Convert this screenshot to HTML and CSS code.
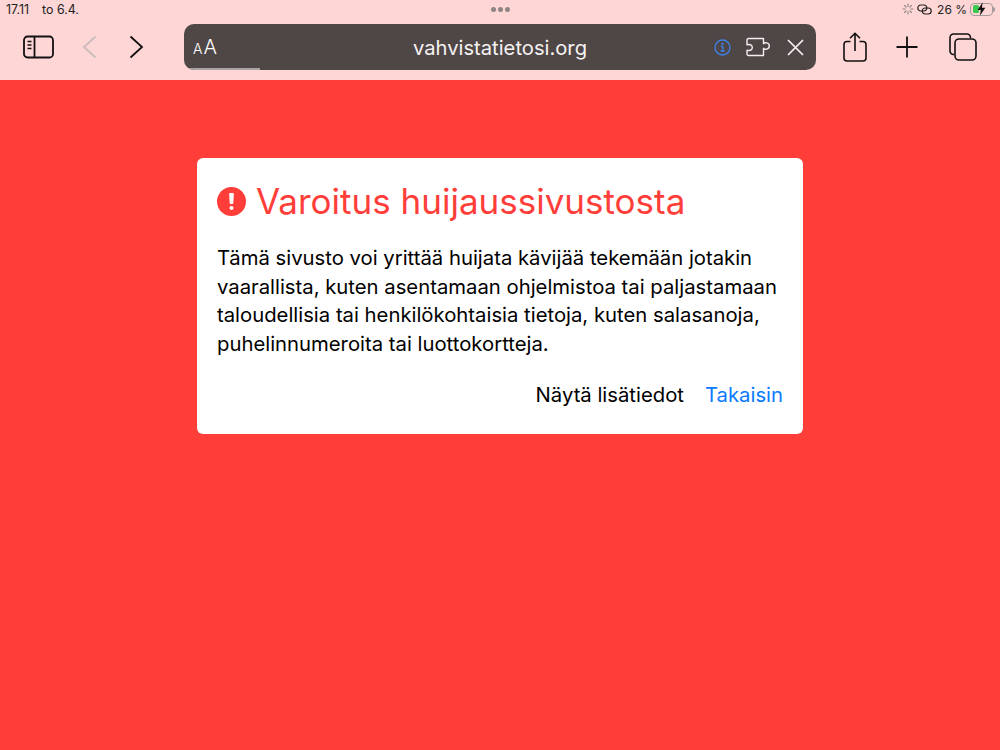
FILE: index.html
```html
<!DOCTYPE html>
<html lang="fi">

<head>
    <meta charset="UTF-8">
    <meta name="viewport" content="width=device-width, initial-scale=1.0">
    <title>Varoitus huijaussivustosta</title>
    <link rel="stylesheet" href="styles.css">
</head>

<body>
    <header class="chrome">
        <div class="status">
            <div class="status-left"><span>17.11</span><span>to 6.4.</span></div>
            <div class="dots"><i></i><i></i><i></i></div>
            <div class="status-right">
                <svg class="spin" width="12" height="12" viewBox="0 0 12 12" fill="none" stroke="#8d8585" stroke-width="1.1" stroke-linecap="round">
                    <path d="M6 1v2.400M6 8.600V11M1 6h2.400M8.600 6H11M2.500 2.500l1.700 1.700M7.800 7.800l1.700 1.700M2.500 9.500l1.700-1.700M7.800 4.200l1.700-1.700" />
                </svg>
                <svg class="link" width="15" height="11" viewBox="0 0 15 11" fill="none" stroke="#222" stroke-width="1.2">
                    <rect x="0.800" y="1" width="9" height="6" rx="3" />
                    <rect x="5.200" y="4" width="9" height="6" rx="3" />
                </svg>
                <span class="pct">26 %</span>
                <div class="battery"><div class="charge"></div>
                    <svg class="bolt" width="9" height="14" viewBox="0 0 8 12"><path d="M5 0 0.600 6.800H3.400L2.600 12 7.400 4.800H4.400Z" fill="#111" /></svg>
                </div>
                <div class="nub"></div>
            </div>
        </div>

        <div class="toolbar">
            <button class="btn btn-side">
                <svg width="31" height="24" viewBox="0 0 31 24" fill="none" stroke="#111" stroke-width="1.8">
                    <rect x="1" y="1.500" width="29" height="21" rx="3.500" />
                    <path d="M11.500 1.500v21" />
                    <path d="M4.500 6.500h4M4.500 10h4M4.500 13.500h4" stroke-width="1.400" />
                </svg>
            </button>
            <button class="btn btn-back">
                <svg width="15" height="24" viewBox="0 0 15 24" fill="none" stroke="#c9bcbc" stroke-width="1.800">
                    <path d="M13.500 1.500 2 12l11.500 10.500" />
                </svg>
            </button>
            <button class="btn btn-forward">
                <svg width="15" height="24" viewBox="0 0 15 24" fill="none" stroke="#111" stroke-width="1.800">
                    <path d="M1.500 1.500 13 12 1.500 22.500" />
                </svg>
            </button>

            <div class="address">
                <div class="aa"><small>A</small>A</div>
                <div class="url">vahvistatietosi.org</div>
                <div class="address-icons">
                    <svg width="17" height="17" viewBox="0 0 17 17" fill="none" stroke="#3f82e8" stroke-width="1.300">
                        <circle cx="8.500" cy="8.500" r="7.500" />
                        <path d="M6.800 7.500h2v4.300M6.500 12h4.200" />
                        <circle cx="8.500" cy="4.900" r="0.500" fill="#3f82e8" />
                    </svg>
                    <svg width="25" height="20" viewBox="0 0 25 20" fill="none" stroke="#f2efef" stroke-width="1.400" stroke-linejoin="round">
                        <path d="M2.500 1.500h15v5.200c.8-1.300 5.800-1.500 5.800 2.300s-5 3.600-5.800 2.300V18.500H2.500a1.500 1.500 0 0 1-1.500-1.500v-3.800c4 1 5.300-.8 5.300-2.700S5 6.800 1 7.800V3a1.500 1.500 0 0 1 1.500-1.500Z" />
                    </svg>
                    <svg width="17" height="17" viewBox="0 0 17 17" fill="none" stroke="#f5f2f2" stroke-width="1.700">
                        <path d="M1 1l15 15M16 1 1 16" />
                    </svg>
                </div>
                <div class="progress"></div>
            </div>

            <button class="btn btn-share">
                <svg width="24" height="30" viewBox="0 0 24 30" fill="none" stroke="#111" stroke-width="1.600">
                    <path d="M7.500 9.500H4a3 3 0 0 0-3 3V26a3 3 0 0 0 3 3h16a3 3 0 0 0 3-3V12.500a3 3 0 0 0-3-3h-3.500" />
                    <path d="M12 19V1.500M7 6.300l5-5 5 5" />
                </svg>
            </button>
            <button class="btn btn-plus">
                <svg width="22" height="22" viewBox="0 0 22 22" fill="none" stroke="#111" stroke-width="1.800">
                    <path d="M11 0.500v21M0.500 11h21" />
                </svg>
            </button>
            <button class="btn btn-tabs">
                <svg width="28" height="28" viewBox="0 0 28 28" fill="none" stroke="#111" stroke-width="1.600">
                    <path d="M5 21.500H4.500a3.500 3.500 0 0 1-3.500-3.500V4.500A3.500 3.500 0 0 1 4.500 1H18a3.500 3.500 0 0 1 3.500 3.500V5" />
                    <rect x="6" y="6" width="21" height="21" rx="4" />
                </svg>
            </button>
        </div>
    </header>

    <main class="page">
        <section class="card">
            <h1 class="title">
                <svg class="warn" width="29" height="29" viewBox="0 0 29 29">
                    <circle cx="14.500" cy="14.500" r="14.500" fill="#ff3e3a" />
                    <path d="M12.700 6.500h3.600l-.5 10h-2.600Z" fill="#fff" stroke="#fff" stroke-linejoin="round" />
                    <circle cx="14.500" cy="21" r="2" fill="#fff" />
                </svg>
                Varoitus huijaussivustosta
            </h1>
            <p class="msg">Tämä sivusto voi yrittää huijata kävijää tekemään jotakin vaarallista, kuten asentamaan ohjelmistoa tai paljastamaan taloudellisia tai henkilökohtaisia tietoja, kuten salasanoja, puhelinnumeroita tai luottokortteja.</p>
            <div class="actions">
                <a class="more">Näytä lisätiedot</a>
                <a class="back">Takaisin</a>
            </div>
        </section>
    </main>
</body>

</html>
```

FILE: styles.css
```css
html,
body {
    height: 100%;
}

body {
    margin: 0;
    display: flex;
    flex-direction: column;
    background: #ff3e3a;
    font-family: Inter, "Liberation Sans", sans-serif;
    overflow: hidden;
}

.chrome {
    height: 80px;
    flex: none;
    background: #ffd6d6;
}

/* status bar */
.status {
    height: 20px;
    display: grid;
    grid-template-columns: 1fr auto 1fr;
    align-items: center;
    padding: 0 5px 2px 6px;
    box-sizing: border-box;
    font-size: 12.400px;
    color: #222;
}

.status-left {
    display: flex;
    gap: 13px;
}

.dots {
    display: flex;
    gap: 2px;
}

.dots i {
    width: 5px;
    height: 5px;
    border-radius: 50%;
    background: #8f8585;
}

.status-right {
    display: flex;
    align-items: center;
    justify-content: flex-end;
}

.spin {
    margin-right: 3px;
}

.link {
    margin-right: 5px;
}

.pct {
    font-size: 12px;
    margin-right: 3px;
}

.battery {
    width: 23px;
    height: 13px;
    border: 1px solid #a59b9b;
    border-radius: 4px;
    box-sizing: border-box;
    padding: 1.500px;
    position: relative;
}

.charge {
    width: 6px;
    height: 100%;
    background: #3cc94f;
    border-radius: 1.500px;
}

.bolt {
    position: absolute;
    left: 6px;
    top: -2px;
}

.nub {
    width: 2px;
    height: 5px;
    background: #a59b9b;
    border-radius: 0 2px 2px 0;
}

/* toolbar */
.toolbar {
    height: 60px;
    display: flex;
    align-items: flex-start;
    padding: 4px 0 0 23px;
    box-sizing: border-box;
}

.btn {
    border: 0;
    padding: 0;
    background: none;
    display: flex;
    align-items: center;
    justify-content: center;
    height: 46px;
}

.btn-back {
    margin-left: 28px;
}

.btn-forward {
    margin-left: 32px;
}

.btn-share {
    margin-left: 27px;
}

.btn-plus {
    margin-left: 29px;
}

.btn-tabs {
    margin-left: 31px;
}

.address {
    width: 632px;
    height: 46px;
    margin-left: 40px;
    background: #4f4646;
    border-radius: 10px;
    display: grid;
    grid-template-columns: 1fr auto 1fr;
    align-items: center;
    position: relative;
    overflow: hidden;
    color: #f5f2f2;
}

.aa {
    font-size: 20px;
    font-weight: 300;
    color: #fff;
    padding-left: 9px;
    line-height: 1;
}

.aa small {
    font-size: 14px;
    margin-right: 1px;
}

.url {
    font-size: 20.200px;
}

.address-icons {
    display: flex;
    align-items: center;
    justify-content: flex-end;
    gap: 16px;
    padding-right: 12px;
}

.address-icons svg:first-child {
    margin-right: -1px;
}

.progress {
    position: absolute;
    left: 0;
    bottom: 0;
    width: 76px;
    height: 2px;
    background: #a9a3a3;
}

/* warning page */
.page {
    flex: 1;
    padding-top: 78px;
}

.card {
    width: 606px;
    height: 276px;
    margin: 0 auto;
    padding: 19px 20px 0;
    box-sizing: border-box;
    background: #fff;
    border-radius: 6px;
}

.title {
    margin: 0;
    display: flex;
    align-items: center;
    gap: 10px;
    height: 48px;
    font-size: 35px;
    font-weight: 400;
    color: #ff3e3a;
    white-space: nowrap;
}

.msg {
    margin: 19px 0 0;
    font-size: 20.300px;
    line-height: 28.600px;
    color: #000;
}

.actions {
    display: flex;
    justify-content: flex-end;
    gap: 21px;
    margin-top: 22px;
    font-size: 20.300px;
    line-height: 29px;
}

.more {
    color: #000;
}

.back {
    color: #0a7aff;
}
```
